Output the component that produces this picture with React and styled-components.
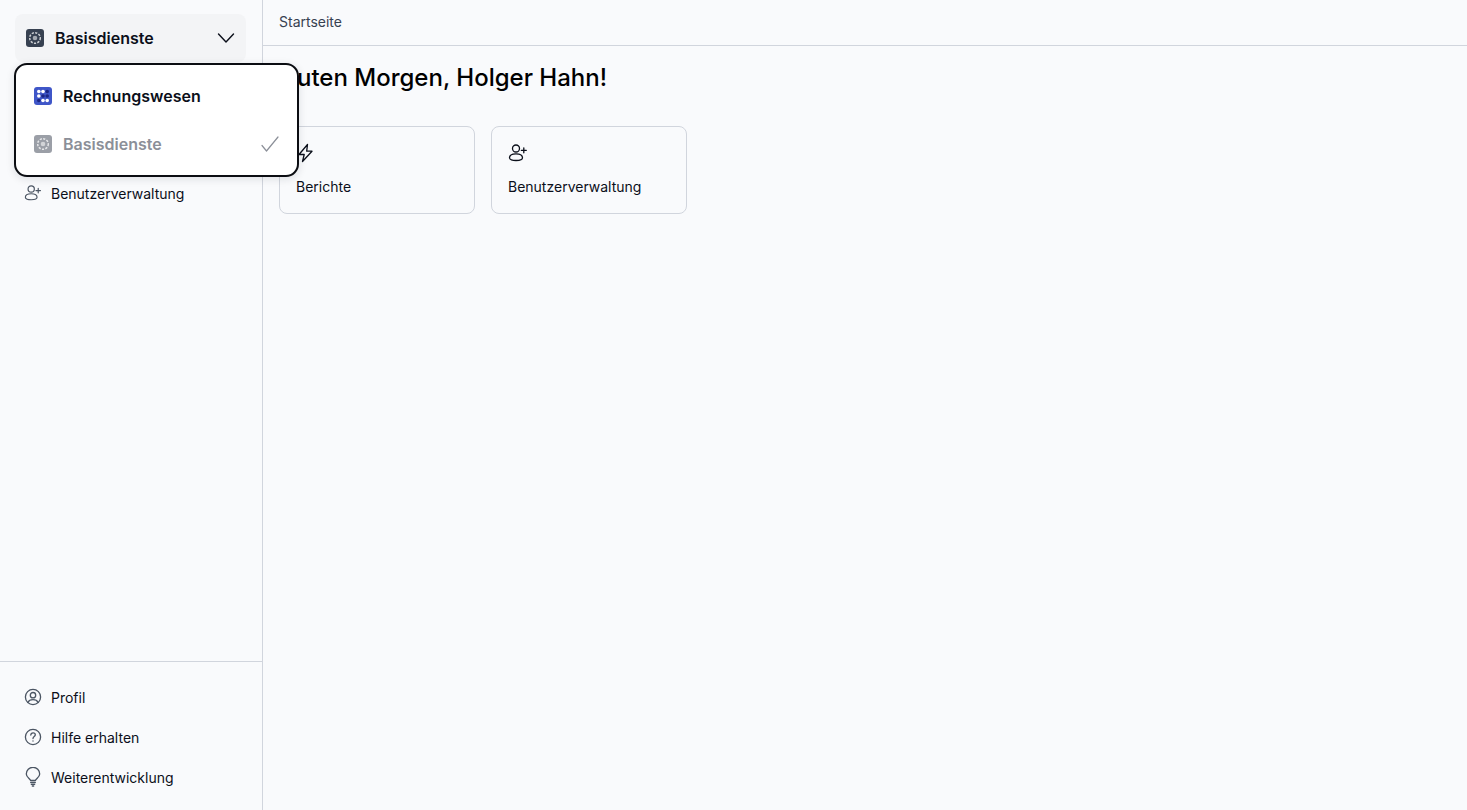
import styled, { createGlobalStyle } from "styled-components";

const GlobalStyle = createGlobalStyle`
  html, body {
    margin: 0;
    height: 100%;
    background-color: #f9fafc;
    font-family: "Inter", "Liberation Sans", sans-serif;
    color: #0b0f1a;
  }
  * {
    box-sizing: border-box;
  }
`;

const Layout = styled.div`
  display: flex;
  width: 100%;
  height: 810px;
  overflow: hidden;
`;

const Sidebar = styled.aside`
  position: relative;
  display: flex;
  flex-direction: column;
  width: 263px;
  flex-shrink: 0;
  border-right: 1px solid #d1d5dd;
`;

const SwitcherWrap = styled.div`
  padding: 14px 16px 0 15px;
`;

const Switcher = styled.button`
  display: flex;
  align-items: center;
  width: 100%;
  height: 48px;
  padding: 0 11px;
  border: none;
  border-radius: 8px;
  background-color: #f3f4f6;
  font-family: inherit;
  font-size: 16px;
  font-weight: 600;
  color: #0b0f1a;
  cursor: pointer;
`;

const SwitcherLabel = styled.span`
  flex: 1;
  margin-left: 11px;
  text-align: left;
`;

const Dropdown = styled.div`
  position: absolute;
  top: 63px;
  left: 14px;
  z-index: 10;
  width: 285px;
  height: 114px;
  padding: 7px 0;
  border: 2px solid #0b0d12;
  border-radius: 13px;
  background-color: #fff;
  box-shadow: 0 2px 8px rgba(17, 24, 39, 0.12);
`;

const DropdownItem = styled.div`
  display: flex;
  align-items: center;
  gap: 11px;
  height: 48px;
  padding: 0 18px;
  font-size: 16px;
  font-weight: 600;
  color: ${(p) => (p.$muted ? "#8b8f98" : "#0b0f1a")};
`;

const ItemLabel = styled.span`
  flex: 1;
`;

const Nav = styled.nav`
  display: flex;
  flex-direction: column;
  flex: 1;
  padding: 31px 24px 0;
`;

const NavItem = styled.a`
  display: flex;
  align-items: center;
  gap: 9px;
  height: 40px;
  font-size: 14px;
  color: #0b0f1a;
  cursor: pointer;
  svg {
    color: #4b5563;
    flex-shrink: 0;
  }
`;

const SidebarFooter = styled.div`
  display: flex;
  flex-direction: column;
  height: 149px;
  padding: 15px 24px 0;
  border-top: 1px solid #d1d5dd;
`;

const Main = styled.main`
  flex: 1;
  min-width: 0;
`;

const TopBar = styled.header`
  display: flex;
  align-items: center;
  height: 46px;
  padding: 0 16px 2px;
  border-bottom: 1px solid #d1d5dd;
  font-size: 14px;
  color: #374151;
`;

const Content = styled.div`
  padding: 16px;
`;

const Greeting = styled.h1`
  margin: 0 0 32px;
  font-size: 24px;
  line-height: 32px;
  font-weight: 500;
  color: #000;
`;

const Cards = styled.div`
  display: flex;
  gap: 16px;
`;

const Card = styled.a`
  display: flex;
  flex-direction: column;
  gap: 14px;
  width: 196px;
  height: 88px;
  padding: 16px;
  border: 1px solid #d1d5dd;
  border-radius: 8px;
  font-size: 14px;
  color: #0b0f1a;
  cursor: pointer;
`;

const CardIcon = styled.span`
  display: flex;
  height: 20px;
  color: #0b0f1a;
`;

const CardLabel = styled.span`
  line-height: 20px;
`;

const LogoTile = styled.svg`
  flex-shrink: 0;
  display: block;
`;

const ServiceLogo = ({ bg }) => (
  <LogoTile width="18" height="18" viewBox="0 0 18 18">
    <rect width="18" height="18" rx="3" fill={bg} />
    <circle cx="9" cy="9" r="5.300" fill="none" stroke="#fff" strokeWidth="1.500" strokeDasharray="2.200 1.300" opacity="0.75" />
    <circle cx="9" cy="9" r="2.300" fill="#fff" opacity="0.55" />
  </LogoTile>
);

const BillingLogo = () => (
  <LogoTile width="18" height="18" viewBox="0 0 18 18">
    <rect width="18" height="18" rx="3" fill="#3f56c8" />
    <circle cx="4.800" cy="4.500" r="1.800" fill="#fff" />
    <circle cx="9" cy="4.500" r="1.800" fill="#fff" />
    <circle cx="13.200" cy="4.500" r="1.800" fill="#1c2784" />
    <circle cx="4.800" cy="9" r="1.800" fill="#fff" />
    <circle cx="9" cy="9" r="1.800" fill="#1c2784" />
    <circle cx="13.200" cy="9" r="1.800" fill="#1c2784" />
    <circle cx="4.800" cy="13.500" r="1.800" fill="#1c2784" />
    <circle cx="9" cy="13.500" r="1.800" fill="#fff" />
    <circle cx="13.200" cy="13.500" r="1.800" fill="#fff" />
  </LogoTile>
);

const Bolt = ({ size = 18 }) => (
  <svg width={size} height={size} viewBox="0 0 20 20" fill="none" stroke="currentColor" strokeWidth="1.300" strokeLinejoin="round">
    <path d="M11.500 1.500L3 11.500h5.200L6.500 18.500 16 8.200h-5.300l.8-6.700z" />
  </svg>
);

const UserAdd = ({ size = 18 }) => (
  <svg width={size} height={size} viewBox="0 0 20 20" fill="none" stroke="currentColor" strokeWidth="1.300" strokeLinecap="round">
    <circle cx="8" cy="5.500" r="3.500" />
    <path d="M1.500 14.800c0-2.500 2.900-4 6.500-4s6.500 1.500 6.500 4c0 1.800-2.900 2.700-6.500 2.700s-6.500-.9-6.500-2.700z" />
    <path d="M15.800 4.800v5M13.300 7.300h5" />
  </svg>
);

const Profile = () => (
  <svg width="18" height="18" viewBox="0 0 18 18" fill="none" stroke="currentColor" strokeWidth="1.300" strokeLinecap="round">
    <circle cx="9" cy="9" r="7.600" />
    <circle cx="9" cy="7.200" r="2.700" />
    <path d="M3.900 14.500c.8-1.800 2.800-2.800 5.100-2.800s4.300 1 5.100 2.800" />
  </svg>
);

const Help = () => (
  <svg width="18" height="18" viewBox="0 0 18 18" fill="none" stroke="currentColor" strokeWidth="1.300" strokeLinecap="round">
    <circle cx="9" cy="9" r="7.600" />
    <path d="M6.800 7c.1-1.300 1-2.100 2.300-2.100s2.200.8 2.200 1.900c0 1.700-2.300 1.800-2.300 3.700" />
    <path d="M9 12.900v.2" />
  </svg>
);

const Bulb = () => (
  <svg width="18" height="20" viewBox="0 0 18 20" fill="none" stroke="currentColor" strokeWidth="1.300" strokeLinecap="round" strokeLinejoin="round">
    <path d="M6.500 13.500C6.300 11.900 2.300 10.400 2.300 7A6.700 6.700 0 0 1 15.700 7c0 3.400-4 4.900-4.200 6.500h-5z" />
    <path d="M6.700 15.500h4.600M7.300 17.300h3.400M8.300 19h1.400" />
  </svg>
);

const Chevron = () => (
  <svg width="18" height="12" viewBox="0 0 18 12" fill="none" stroke="#0b0f1a" strokeWidth="1.400" strokeLinecap="round" strokeLinejoin="round">
    <path d="M1.500 2l7.500 8 7.500-8" />
  </svg>
);

const Check = () => (
  <svg width="18" height="16" viewBox="0 0 18 16" fill="none" stroke="#8b8f98" strokeWidth="1.200" strokeLinecap="round" strokeLinejoin="round">
    <path d="M1 9.500l4.500 5.500L17 1" />
  </svg>
);

const App = () => {
  return (
    <Layout>
      <GlobalStyle />
      <Sidebar>
        <SwitcherWrap>
          <Switcher>
            <ServiceLogo bg="#374151" />
            <SwitcherLabel>Basisdienste</SwitcherLabel>
            <Chevron />
          </Switcher>
        </SwitcherWrap>
        <Dropdown>
          <DropdownItem>
            <BillingLogo />
            <ItemLabel>Rechnungswesen</ItemLabel>
          </DropdownItem>
          <DropdownItem $muted>
            <ServiceLogo bg="#9b9fa7" />
            <ItemLabel>Basisdienste</ItemLabel>
            <Check />
          </DropdownItem>
        </Dropdown>
        <Nav>
          <NavItem>Startseite</NavItem>
          <NavItem>
            <Bolt />
            Berichte
          </NavItem>
          <NavItem>
            <UserAdd />
            Benutzerverwaltung
          </NavItem>
        </Nav>
        <SidebarFooter>
          <NavItem>
            <Profile />
            Profil
          </NavItem>
          <NavItem>
            <Help />
            Hilfe erhalten
          </NavItem>
          <NavItem>
            <Bulb />
            Weiterentwicklung
          </NavItem>
        </SidebarFooter>
      </Sidebar>
      <Main>
        <TopBar>Startseite</TopBar>
        <Content>
          <Greeting>Guten Morgen, Holger Hahn!</Greeting>
          <Cards>
            <Card>
              <CardIcon>
                <Bolt size={20} />
              </CardIcon>
              <CardLabel>Berichte</CardLabel>
            </Card>
            <Card>
              <CardIcon>
                <UserAdd size={20} />
              </CardIcon>
              <CardLabel>Benutzerverwaltung</CardLabel>
            </Card>
          </Cards>
        </Content>
      </Main>
    </Layout>
  );
};

export default App;
